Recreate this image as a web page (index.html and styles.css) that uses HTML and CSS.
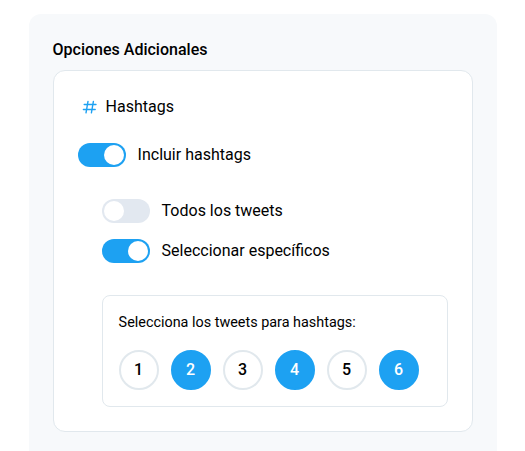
FILE: index.html
```html
<!DOCTYPE html>
<html lang="es">
<head>
<meta charset="utf-8">
<title>Opciones Adicionales</title>
<link rel="stylesheet" href="styles.css">
</head>
<body>
<section class="panel">
  <h2 class="panel-title">Opciones Adicionales</h2>
  <div class="card">
    <div class="card-heading">
      <svg class="hash" viewBox="0 0 16 16" aria-hidden="true"><path d="M2.2 5.5H14M1.4 10.5h11.8M6 2.4 4 13.8M11.4 2.4l-2 11.4"/></svg>
      <span>Hashtags</span>
    </div>
    <div class="option"><span class="switch on"></span><span>Incluir hashtags</span></div>
    <div class="suboptions">
      <div class="option"><span class="switch"></span><span>Todos los tweets</span></div>
      <div class="option"><span class="switch on"></span><span>Seleccionar específicos</span></div>
      <div class="picker">
        <p class="picker-label">Selecciona los tweets para hashtags:</p>
        <div class="numbers">
          <button class="number">1</button>
          <button class="number selected">2</button>
          <button class="number">3</button>
          <button class="number selected">4</button>
          <button class="number">5</button>
          <button class="number selected">6</button>
        </div>
      </div>
    </div>
  </div>
</section>
</body>
</html>
```
FILE: styles.css
```css
* { box-sizing: border-box; }
body {
  margin: 0;
  padding: 14px 28.4px 0 28.6px;
  height: 451px;
  background: #fff;
  color: #000;
  font: 16px/24px Roboto, sans-serif;
}
.panel {
  height: 437px;
  padding: 24px 24px 19px;
  border-radius: 12px 12px 0 0;
  background: #f7f9fb;
}
.panel-title {
  margin: 0 0 8px;
  font-size: 16px;
  line-height: 24px;
  font-weight: 500;
}
.card {
  height: 362px;
  padding: 24px;
  border: 1px solid #e1e8ed;
  border-radius: 12px;
  background: #fff;
}
.card-heading {
  display: flex;
  align-items: center;
  gap: 8px;
  margin: 0 0 24px 4px;
}
.hash {
  width: 16px;
  height: 16px;
  fill: none;
  stroke: #1da1f2;
  stroke-width: 1.4;
  stroke-linecap: round;
}
.option {
  display: flex;
  align-items: center;
  gap: 12px;
  height: 24px;
}
.switch {
  width: 48px;
  height: 24px;
  padding: 2px;
  border-radius: 12px;
  background: #e2e8f0;
}
.switch::before {
  content: "";
  display: block;
  width: 20px;
  height: 20px;
  border-radius: 50%;
  background: #fff;
}
.switch.on { background: #1da1f2; }
.switch.on::before { margin-left: 24px; }
.suboptions { margin: 32px 0 0 24px; }
.suboptions .option + .option { margin-top: 16px; }
.picker {
  height: 112px;
  margin-top: 32px;
  padding: 16px;
  border: 1px solid #e1e8ed;
  border-radius: 8px;
}
.picker-label {
  margin: 0 0 16px;
  font-size: 14.4px;
  line-height: 21.6px;
}
.numbers { display: flex; gap: 12px; }
.number {
  width: 40px;
  height: 40px;
  padding: 0;
  border: 2px solid #e1e8ed;
  border-radius: 50%;
  background: #fff;
  color: #000;
  font: 500 16px Roboto, sans-serif;
}
.number.selected {
  border-color: #1da1f2;
  background: #1da1f2;
  color: #fff;
}
```
